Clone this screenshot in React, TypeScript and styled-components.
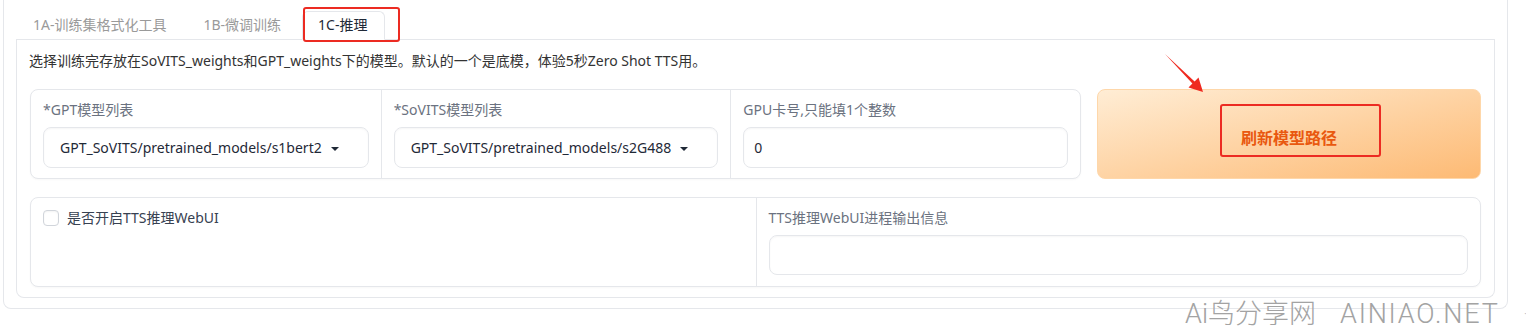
import React from "react";
import styled, { createGlobalStyle } from "styled-components";

const GlobalStyle = createGlobalStyle`
  html, body {
    margin: 0;
    padding: 0;
    background: #fff;
  }
  body {
    font-family: "Noto Sans", "Noto Sans CJK SC", sans-serif;
    color: #374151;
  }
  * {
    box-sizing: border-box;
  }
`;

const Page = styled.div`
  position: relative;
  width: 1526px;
  height: 333px;
  overflow: hidden;
`;

const Frame = styled.div`
  margin-left: 3px;
  width: 1505px;
  border: 1px solid #e5e7eb;
  border-top: none;
  border-radius: 0 0 8px 8px;
  padding: 0 12px 10px;
`;

const TabStrip = styled.div`
  display: flex;
  align-items: flex-end;
  gap: 3px;
  height: 40px;
  padding-left: 1px;
  border-bottom: 1px solid #e5e7eb;
`;

const Tab = styled.button<{ $active?: boolean }>`
  height: 29px;
  margin-bottom: -1px;
  padding: 0 17px 1px 15px;
  border: 1px solid ${(p) => (p.$active ? "#e5e7eb" : "transparent")};
  border-bottom-color: ${(p) => (p.$active ? "#fff" : "transparent")};
  border-radius: 6px 6px 0 0;
  background: ${(p) => (p.$active ? "#fff" : "transparent")};
  color: ${(p) => (p.$active ? "#1f2937" : "#9a9a9a")};
  font-family: inherit;
  font-size: 14px;
  line-height: 26px;
  cursor: pointer;
`;

const Panel = styled.div`
  display: flex;
  flex-direction: column;
  gap: 18px;
  border: 1px solid #e5e7eb;
  border-top: none;
  border-radius: 0 0 8px 8px;
  padding: 10px 13px 10px;
`;

const Description = styled.p`
  margin: 0 0 0 -1px;
  font-size: 14px;
  line-height: 21px;
  color: #333;
`;

const TopRow = styled.div`
  display: grid;
  grid-template-columns: 1051px 1fr;
  gap: 16px;
`;

const Group = styled.div<{ $cols: number }>`
  display: grid;
  grid-template-columns: repeat(${(p) => p.$cols}, 1fr);
  height: 90px;
  border: 1px solid #e5e7eb;
  border-radius: 8px;
  background: #fff;
  box-shadow: 0 1px 2px rgba(0, 0, 0, 0.03);
  overflow: hidden;
`;

const Column = styled.div`
  display: flex;
  flex-direction: column;
  gap: 7px;
  padding: 10px 12px;
  & + & {
    border-left: 1px solid #e5e7eb;
  }
`;

const Label = styled.span`
  font-size: 14px;
  line-height: 20px;
  color: #6b7280;
`;

const Field = styled.div`
  display: flex;
  align-items: center;
  gap: 9px;
  height: 41px;
  padding: 0 16px;
  border: 1px solid #e5e7eb;
  border-radius: 8px;
  background: #fff;
  box-shadow: inset 0 1px 2px rgba(0, 0, 0, 0.04);
  font-size: 14px;
  color: #1f2937;
  white-space: nowrap;
`;

const Caret = styled.span`
  width: 0;
  height: 0;
  margin-top: 2px;
  border-left: 4px solid transparent;
  border-right: 4px solid transparent;
  border-top: 4px solid #1f2937;
`;

const NumberField = styled(Field)`
  padding: 0 10px;
`;

const PrimaryButton = styled.button`
  height: 90px;
  padding-top: 6px;
  border: 1px solid #fed7aa;
  border-radius: 8px;
  background: linear-gradient(to bottom right, #ffedd5, #fdba74);
  color: #e9580f;
  font-family: inherit;
  font-size: 16px;
  font-weight: 600;
  cursor: pointer;
`;

const CheckRow = styled.label`
  display: flex;
  align-items: center;
  gap: 8px;
  font-size: 14px;
  line-height: 20px;
  color: #374151;
`;

const CheckBox = styled.span`
  width: 16px;
  height: 16px;
  border: 1px solid #d1d5db;
  border-radius: 4px;
  background: #fff;
  box-shadow: inset 0 1px 2px rgba(0, 0, 0, 0.05);
`;

const OutputBox = styled.div`
  height: 40px;
  border: 1px solid #e5e7eb;
  border-radius: 8px;
  box-shadow: inset 0 1px 2px rgba(0, 0, 0, 0.04);
`;

const RedMark = styled.div<{ $x: number; $y: number; $w: number; $h: number }>`
  position: absolute;
  left: ${(p) => p.$x}px;
  top: ${(p) => p.$y}px;
  width: ${(p) => p.$w}px;
  height: ${(p) => p.$h}px;
  border: 2.5px solid #ec2b22;
  border-radius: 3px;
  pointer-events: none;
`;

const Arrow = styled.svg`
  position: absolute;
  left: 1160px;
  top: 50px;
  width: 50px;
  height: 50px;
  pointer-events: none;
`;

const Watermark = styled.div`
  position: absolute;
  left: 1185px;
  top: 299px;
  display: flex;
  align-items: center;
  font-family: Roboto, "Noto Sans CJK SC", sans-serif;
  font-weight: 300;
  font-size: 27px;
  line-height: 30px;
  color: #a3a3a3;
  white-space: nowrap;
`;

const MarkText = styled.span<{ $spacing?: number }>`
  margin-right: 24px;
  letter-spacing: ${(p) => p.$spacing ?? 0}px;
`;

const MarkDot = styled.span`
  font-size: 14px;
  color: #b5b5b5;
`;

const models = [
  { label: "*GPT模型列表", value: "GPT_SoVITS/pretrained_models/s1bert2" },
  { label: "*SoVITS模型列表", value: "GPT_SoVITS/pretrained_models/s2G488" },
];

const App: React.FC = () => {
  return (
    <Page>
      <GlobalStyle />
      <Frame>
        <TabStrip>
          <Tab>1A-训练集格式化工具</Tab>
          <Tab>1B-微调训练</Tab>
          <Tab $active>1C-推理</Tab>
        </TabStrip>
        <Panel>
          <Description>
            选择训练完存放在SoVITS_weights和GPT_weights下的模型。默认的一个是底模，体验5秒Zero Shot TTS用。
          </Description>
          <TopRow>
            <Group $cols={3}>
              {models.map((m) => (
                <Column key={m.label}>
                  <Label>{m.label}</Label>
                  <Field>
                    {m.value}
                    <Caret />
                  </Field>
                </Column>
              ))}
              <Column>
                <Label>GPU卡号,只能填1个整数</Label>
                <NumberField>0</NumberField>
              </Column>
            </Group>
            <PrimaryButton>刷新模型路径</PrimaryButton>
          </TopRow>
          <Group $cols={2}>
            <Column>
              <CheckRow>
                <CheckBox />
                是否开启TTS推理WebUI
              </CheckRow>
            </Column>
            <Column>
              <Label>TTS推理WebUI进程输出信息</Label>
              <OutputBox />
            </Column>
          </Group>
        </Panel>
      </Frame>

      <RedMark $x={303} $y={7} $w={97} $h={35} />
      <RedMark $x={1220} $y={104} $w={161} $h={53} />
      <Arrow viewBox="0 0 50 50">
        <polygon
          points="5,4 34.6,31.4 38.5,27.5 43,42 28.5,37.5 32.4,33.6"
          fill="#ef2a20"
        />
      </Arrow>
      <Watermark>
        <MarkText>Ai鸟分享网</MarkText>
        <MarkText $spacing={1.8}>AINIAO.NET</MarkText>
        <MarkDot>·</MarkDot>
      </Watermark>
    </Page>
  );
};

export default App;
